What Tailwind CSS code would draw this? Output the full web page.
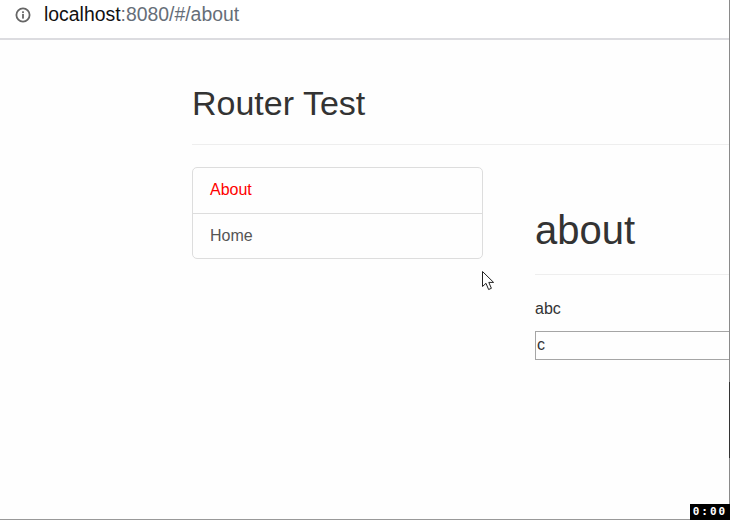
<!DOCTYPE html>
<html lang="en">
<head>
  <meta charset="UTF-8" />
  <title>Router Test</title>
  <script src="https://cdn.jsdelivr.net/npm/@tailwindcss/browser@4"></script>
</head>
<body class="relative w-[730px] h-[520px] overflow-hidden bg-[#fefefe] font-['Liberation_Sans',Arial,sans-serif] text-[#333]">
  <!-- address bar -->
  <div class="h-10 bg-white border-b-2 border-[#dcdce0] flex items-center pl-[15px] pb-[8px]">
    <svg class="w-4 h-4 shrink-0" viewBox="0 0 16 16" fill="none">
      <circle cx="8" cy="8" r="6.6" stroke="#666" stroke-width="1.8"/>
      <rect x="7.1" y="7" width="1.8" height="4.6" fill="#666"/>
      <rect x="7.1" y="4.3" width="1.8" height="1.8" fill="#666"/>
    </svg>
    <div class="ml-[13px] text-[19.4px] leading-none text-[#666e78]"><span class="text-[#111]">localhost</span>:8080/#/about</div>
  </div>

  <div class="pl-[192px]">
    <div class="h-[105px] border-b border-[#eee] pt-[44px]">
      <h1 class="text-[34px] leading-[38px] text-[#333]">Router Test</h1>
    </div>

    <div class="flex mt-[22px]">
      <div class="w-[291px] h-[92px] shrink-0 border border-[#ddd] rounded-[5px] text-[16px]">
        <div class="h-[46px] border-b border-[#ddd] pl-[17px] pb-[1px] flex items-center text-[#f00]">About</div>
        <div class="h-[44px] pl-[17px] flex items-center text-[#555]">Home</div>
      </div>

      <div class="ml-[52px] w-[195px]">
        <div class="h-[108px] border-b border-[#eee] pt-[41px]">
          <h2 class="text-[40px] leading-[44px] text-[#333]">about</h2>
        </div>
        <p class="mt-[24px] text-[16px] leading-[20px]">abc</p>
        <input value="c" class="mt-[12px] w-[200px] h-[29px] border border-[#a5a5a5] pl-[1px] pb-[1px] text-[16px] text-[#333] outline-none" />
      </div>
    </div>
  </div>

  <!-- mouse cursor over the page -->
  <svg class="absolute left-[481px] top-[270px]" width="16" height="21" viewBox="0 0 16 21" fill="none">
    <path d="M1.5 1.5V16.5L5 13.3L7.6 19.5L10.4 18.3L7.8 12.4H12.6Z" fill="#fff" stroke="#222" stroke-width="1"/>
  </svg>

  <!-- recording edges and timer -->
  <div class="absolute right-0 top-0 w-px h-full bg-[#8a8a8a]"></div>
  <div class="absolute right-0 top-[382px] w-px h-[76px] bg-[#333]"></div>
  <div class="absolute left-0 bottom-0 w-full h-px bg-[#999]"></div>
  <div class="absolute right-0 bottom-0 w-[40px] h-[16px] bg-black text-white font-['DejaVu_Sans_Mono',monospace] font-bold text-[11px] leading-[16px] text-center tracking-[2px]">0:00</div>
</body>
</html>
